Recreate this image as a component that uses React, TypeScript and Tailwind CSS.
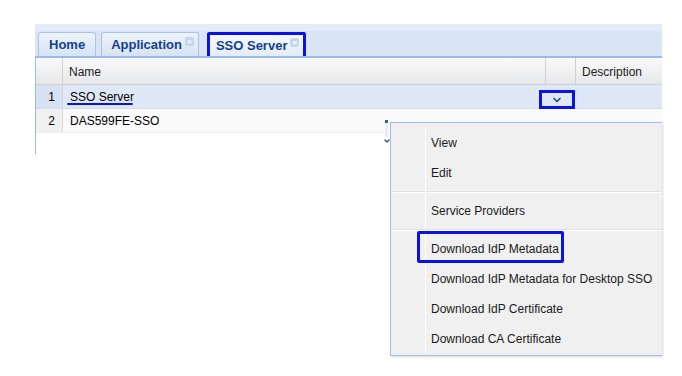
import { ChevronDown } from 'lucide-react'

const menuItems: (string | null)[] = [
  'View',
  'Edit',
  null,
  'Service Providers',
  null,
  'Download IdP Metadata',
  'Download IdP Metadata for Desktop SSO',
  'Download IdP Certificate',
  'Download CA Certificate',
]

function Tab({ label, closable, active }: { label: string; closable?: boolean; active?: boolean }) {
  return (
    <div
      className={`flex items-center gap-[3px] h-[24px] rounded-t-[3px] border-b-0 ${
        active
          ? 'ml-[3px] pl-[6px] pr-[4px] border-[3px] border-b-0 border-[#0a12e8] bg-gradient-to-b from-[#f4f8fd] to-[#e3ecf8]'
          : closable
            ? 'pl-[9px] pr-[4px] border border-[#a9c4e8] bg-gradient-to-b from-[#eef3fa] to-[#d7e3f3]'
            : 'px-[10px] border border-[#a9c4e8] bg-gradient-to-b from-[#eef3fa] to-[#d7e3f3]'
      }`}
    >
      <span className="text-[13px] font-bold text-[#15428b] whitespace-nowrap">{label}</span>
      {closable && (
        <span className="w-[9px] h-[9px] -mt-[6px] rounded-[2px] bg-[#c6d6ee] text-[8px] leading-[9px] text-white text-center font-bold">
          ×
        </span>
      )}
    </div>
  )
}

export default function App() {
  return (
    <div className="w-[682px] h-[376px] bg-white relative overflow-hidden font-['Liberation_Sans',Arial,sans-serif]">
      <div className="ml-[35px] mt-[24px] w-[627px]">
        {/* tab strip */}
        <div className="h-[34px] bg-[#d9e5f4] border-t-[7px] border-[#e2ebf7] border-b-2 border-b-[#99bbe8] flex items-end pl-[3px] gap-[5px]">
          <Tab label="Home" />
          <Tab label="Application" closable />
          <Tab label="SSO Server" closable active />
        </div>

        {/* grid */}
        <div className="border-l border-[#99bbe8] h-[96px]">
          <div className="flex h-[27px] bg-gradient-to-b from-[#fafafa] to-[#e6e7e9] border-b border-[#d0d0d0] text-[12px] text-[#222]">
            <div className="w-[27px] border-r border-[#d0d0d0]" />
            <div className="w-[483px] border-r border-[#d0d0d0] flex items-center pl-[6px] pt-[2px]">Name</div>
            <div className="w-[30px] border-r border-[#d0d0d0]" />
            <div className="flex-1 flex items-center pl-[6px] pt-[2px]">Description</div>
          </div>

          <div className="flex h-[24px] bg-[#dfe8f6] border-b border-dotted border-[#c6d3e6] text-[12px] text-black">
            <div className="w-[27px] bg-[#d6e1f1] border-r border-[#cfd8e4] flex items-center justify-end pr-[7px]">1</div>
            <div className="w-[483px] flex items-center pl-[7px] relative">
              <span>SSO Server</span>
              <div className="absolute left-[4px] top-[18px] w-[66px] h-[2px] rounded-full bg-[#0a12e8]" />
            </div>
            <div className="w-[30px] flex items-center relative">
              <div className="absolute left-[-7px] top-[5px] w-[36px] h-[19px] border-[3px] border-[#0a12e8] flex items-center justify-center">
                <ChevronDown size={12} strokeWidth={3.5} className="text-[#2d4f7c]" />
              </div>
            </div>
            <div className="flex-1" />
          </div>

          <div className="flex h-[24px] bg-[#fafafa] border-b border-dotted border-[#e4e4e4] text-[12px] text-black">
            <div className="w-[27px] bg-[#f0f0f0] border-r border-[#d8d8d8] flex items-center justify-end pr-[7px]">2</div>
            <div className="flex items-center pl-[7px]">DAS599FE-SSO</div>
          </div>
        </div>
      </div>

      {/* scroll stub beside menu */}
      <div className="absolute left-[384px] top-[120px] flex flex-col items-center w-[5px]">
        <div className="w-[3px] h-[3px] bg-[#3b5f9e]" />
        <div className="w-[3px] h-[14px] bg-[#e8eef7]" />
        <ChevronDown size={8} strokeWidth={4} className="text-[#2d4f7c]" />
      </div>

      {/* context menu */}
      <div className="absolute left-[390px] top-[122px] w-[272px] h-[234px] bg-[#f0f0f0] border border-r-0 border-[#9fbde6] shadow-[1px_1px_2px_rgba(0,0,0,0.15)]">
        <div className="absolute left-[34px] top-[4px] bottom-[1px] w-px bg-[#e2e3e3] border-r border-white" />
        <div className="flex flex-col pt-[5px] text-[12px] text-[#1b1b1b]">
          {menuItems.map((item, i) =>
            item === null ? (
              <div key={i} className="ml-[1px] h-[2px] my-[3px] border-t border-[#e0e0e0] bg-white" />
            ) : (
              <div key={i} className="h-[30px] flex items-center pl-[40px] relative whitespace-nowrap">
                <span>{item}</span>
                {item === 'Download IdP Metadata' && (
                  <div className="absolute left-[26px] top-[-3px] w-[147px] h-[32px] border-[3px] border-[#0a12e8] rounded-[2px]" />
                )}
              </div>
            ),
          )}
        </div>
      </div>
    </div>
  )
}
